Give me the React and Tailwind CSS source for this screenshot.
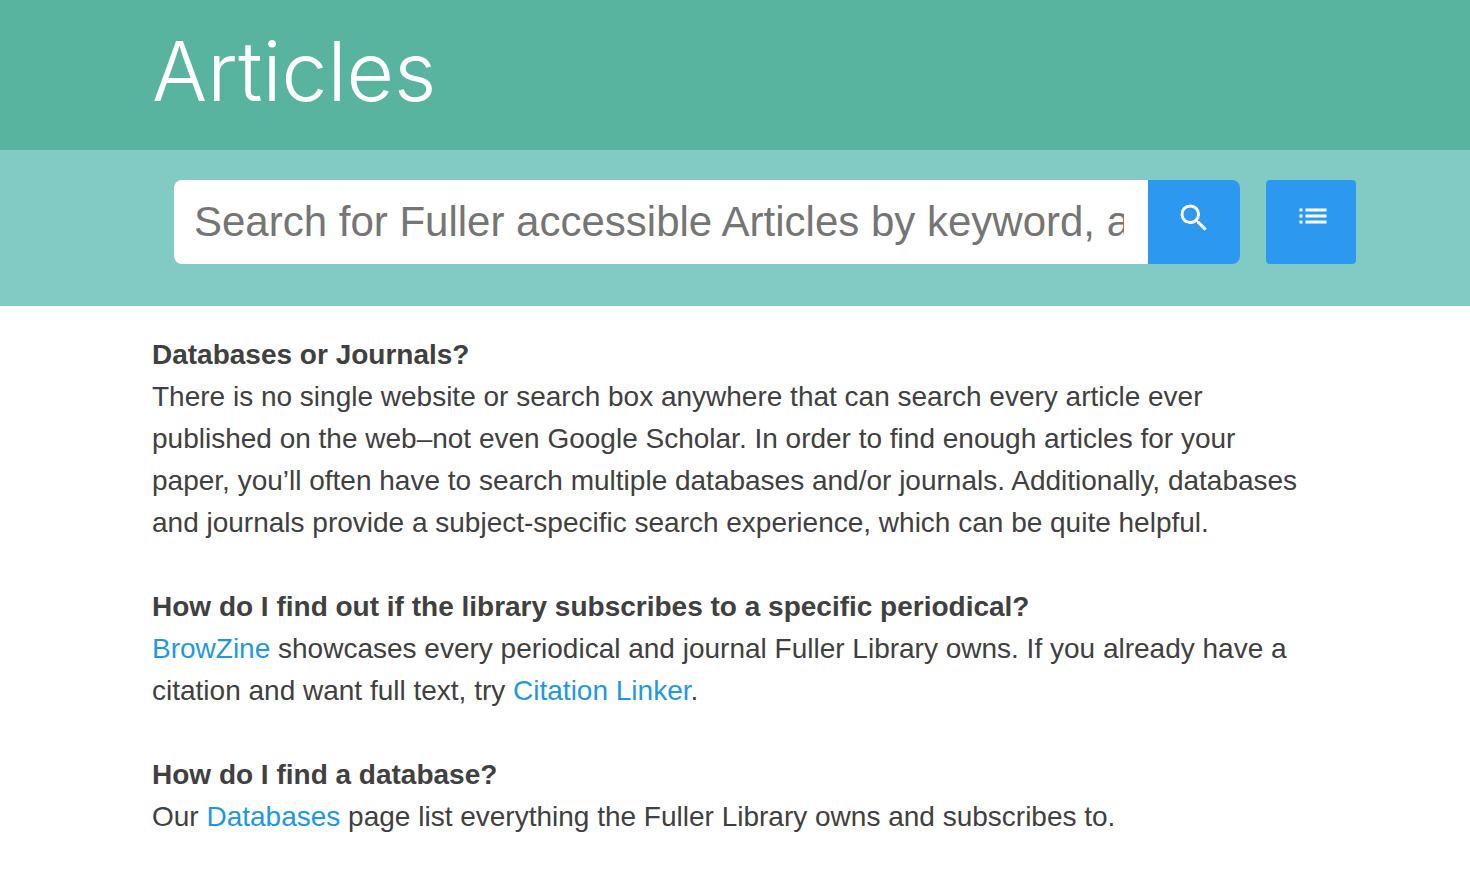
import { MdSearch, MdList } from 'react-icons/md';

const linkClass = 'text-[#1e98e4] hover:underline';

const Question = ({ title, children }) => (
  <section>
    <h2 className="font-bold">{title}</h2>
    <p>{children}</p>
  </section>
);

const SearchBar = () => (
  <form
    role="search"
    onSubmit={(e) => e.preventDefault()}
    className="flex h-[156px] items-start gap-[26px] bg-[#82cbc4] pt-[30px] pr-[114px] pl-[174px]"
  >
    <div className="flex h-[84px] min-w-0 flex-1">
      <input
        type="text"
        aria-label="Search articles"
        placeholder="Search for Fuller accessible Articles by keyword, author, or title"
        className="min-w-0 flex-1 rounded-l-lg bg-white pr-6 pl-5 text-[42px] text-[#404040] outline-none placeholder:text-[#757575]"
      />
      <button
        type="submit"
        aria-label="Search"
        className="flex w-[92px] justify-center rounded-r-lg bg-[#2d98f0] pt-5 text-white"
      >
        <MdSearch className="size-9" />
      </button>
    </div>
    <button
      type="button"
      aria-label="Browse list"
      className="flex h-[84px] w-[90px] justify-center rounded bg-[#2d98f0] pt-[18px] pl-1 text-white"
    >
      <MdList className="size-9" />
    </button>
  </form>
);

function App() {
  return (
    <div className="min-h-screen bg-white font-['Liberation_Sans',Arial,sans-serif] text-[28px] leading-[42px] text-[#404040]">
      <header className="flex h-[150px] items-start bg-[#58b39f] px-[152px] pt-[30px]">
        <h1 className="font-['Inter','Liberation_Sans',sans-serif] text-[82px] leading-[84px] font-[350] text-white">
          Articles
        </h1>
      </header>

      <SearchBar />

      <main className="flex flex-col gap-[42px] px-[152px] pt-7 pb-10">
        <Question title="Databases or Journals?">
          There is no single website or search box anywhere that can search every article ever published on the
          web–not even Google Scholar. In order to find enough articles for your paper, you’ll often have to search
          multiple databases and/or journals. Additionally, databases and journals provide a subject-specific search
          experience, which can be quite helpful.
        </Question>
        <Question title="How do I find out if the library subscribes to a specific periodical?">
          <a href="#browzine" className={linkClass}>BrowZine</a> showcases every periodical and journal Fuller
          Library owns. If you already have a citation and want full text, try{' '}
          <a href="#citation-linker" className={linkClass}>Citation Linker</a>.
        </Question>
        <Question title="How do I find a database?">
          Our <a href="#databases" className={linkClass}>Databases</a> page list everything the Fuller Library owns
          and subscribes to.
        </Question>
      </main>
    </div>
  );
}

export default App;
